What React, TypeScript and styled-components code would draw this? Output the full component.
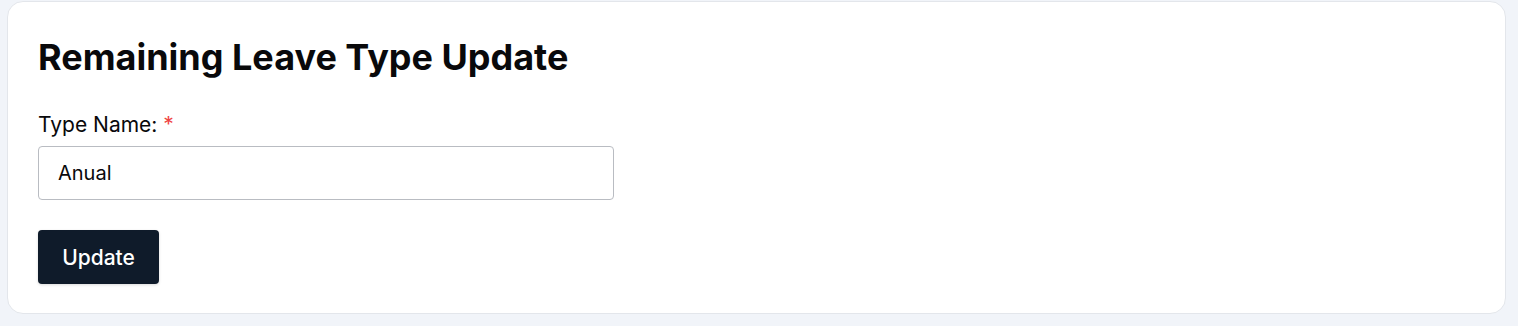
import * as React from "react";
import styled, { createGlobalStyle } from "styled-components";

const GlobalStyle = createGlobalStyle`
  * { box-sizing: border-box; }
  body {
    margin: 0;
    background: #f1f4f9;
    font-family: Inter, "Noto Sans", sans-serif;
    color: #09090b;
  }
`;

const Page = styled.div`
  padding: 1px 12px 11px 7px;
`;

const Card = styled.div`
  background: #ffffff;
  border: 1px solid #e3e6eb;
  border-radius: 16px;
  padding: 33px 30px 29px;
`;

const Title = styled.h1`
  margin: 0 0 34px;
  font-size: 36px;
  font-weight: 700;
  line-height: 44px;
`;

const Field = styled.div`
  display: flex;
  flex-direction: column;
  gap: 9px;
  width: 576px;
`;

const Label = styled.label`
  font-size: 21px;
  font-weight: 400;
  line-height: 24px;
`;

const Required = styled.span`
  color: #ef4444;
  margin-left: 6px;
`;

const Input = styled.input`
  height: 54px;
  padding: 0 19px;
  border: 1px solid #b9bcc2;
  border-radius: 4px;
  font-family: inherit;
  font-size: 20px;
  color: #09090b;
  outline: none;
`;

const Button = styled.button`
  margin-top: 30px;
  height: 54px;
  width: 121px;
  border: none;
  border-radius: 4px;
  background: #0f1b2a;
  color: #ffffff;
  font-family: inherit;
  font-size: 21px;
  font-weight: 500;
  box-shadow: 0 1px 3px rgba(0, 0, 0, 0.15);
  cursor: pointer;
`;

export default function App() {
  return (
    <>
      <GlobalStyle />
      <Page>
        <Card>
          <Title>Remaining Leave Type Update</Title>
          <Field>
            <Label>
              Type Name:<Required>*</Required>
            </Label>
            <Input defaultValue="Anual" />
          </Field>
          <Button>Update</Button>
        </Card>
      </Page>
    </>
  );
}
